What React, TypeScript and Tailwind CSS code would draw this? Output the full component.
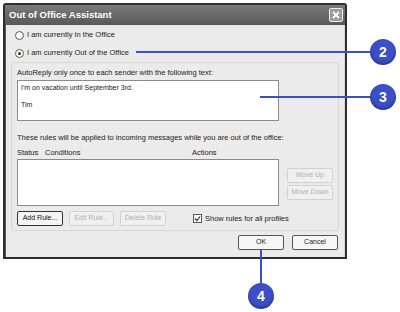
import React from 'react'

const font = { fontFamily: '"Liberation Sans", Arial, sans-serif' }

function Radio({ checked, label }: { checked?: boolean; label: string }) {
  return (
    <div className="flex items-center gap-[3px] h-[12px]">
      <span className="flex h-[9px] w-[9px] items-center justify-center rounded-full border border-[#5a5a5a] bg-white">
        {checked && <span className="h-[3px] w-[3px] rounded-full bg-[#333]" />}
      </span>
      <span className="text-[7.5px] text-[#222]">{label}</span>
    </div>
  )
}

function Btn({ label, disabled, strong, w }: { label: string; disabled?: boolean; strong?: boolean; w: string }) {
  return (
    <div
      className={`flex h-[15px] ${w} items-center justify-center rounded-[2px] text-[7px] ${
        disabled
          ? 'border border-[#d2d2d2] bg-[#f0f0f0] text-[#b0b0b0]'
          : strong
          ? 'border-[1.5px] border-[#333] bg-[#f4f4f4] text-[#111]'
          : 'border border-[#555] bg-[#f6f6f6] text-[#222]'
      }`}
    >
      {label}
    </div>
  )
}

function Callout({ n }: { n: string }) {
  return (
    <div className="flex h-[26px] w-[26px] items-center justify-center rounded-full bg-[#3c4fc6] text-[14px] font-bold text-white shadow-[inset_0_-2px_3px_rgba(0,0,0,0.3)]">
      {n}
    </div>
  )
}

export default function App() {
  return (
    <div className="relative h-[312px] w-[400px] overflow-hidden bg-white" style={font}>
      <div className="ml-[3px] mt-[3px] flex h-[256px] w-[344px] flex-col rounded-t-[3px] border-[2px] border-[#2e2e2e] bg-[#ebebeb]">
        <div className="flex h-[20px] items-center justify-between bg-gradient-to-b from-[#7b7b7b] to-[#585858] pl-[4px] pr-[2px]">
          <span className="text-[9.5px] font-bold text-white">Out of Office Assistant</span>
          <span className="flex h-[14px] w-[14px] items-center justify-center rounded-[2px] border border-[#eee] bg-[#9a9a9a]">
            <svg width="8" height="8" viewBox="0 0 8 8">
              <path d="M1 1L7 7M7 1L1 7" stroke="white" strokeWidth="1.8" />
            </svg>
          </span>
        </div>
        <div className="flex flex-1 border-l-[1px] border-[#555]">
          <div className="flex flex-1 flex-col px-[5px] pt-[4px]">
            <div className="flex flex-col gap-[6px] pl-[4px]">
              <Radio label="I am currently In the Office" />
              <Radio checked label="I am currently Out of the Office" />
            </div>
            <div className="mt-[3px] flex flex-col rounded-[3px] border border-[#d6d6d6] px-[5px] pb-[4px] pt-[4px]">
              <span className="text-[7.5px] text-[#222]">AutoReply only once to each sender with the following text:</span>
              <div className="mt-[2px] flex h-[41px] w-[262px] flex-col border border-[#8a8a8a] bg-white px-[3px] pt-[2px] text-[7px] leading-[9px] text-[#222]">
                <span>I'm on vacation until September 3rd.</span>
                <span className="mt-[8px]">Tim</span>
              </div>
              <span className="mt-[11px] text-[7.5px] text-[#222]">
                These rules will be applied to incoming messages while you are out of the office:
              </span>
              <div className="mt-[3px] flex w-[262px] text-[7.5px] text-[#222]">
                <span className="w-[28px]">Status</span>
                <span className="w-[147px]">Conditions</span>
                <span>Actions</span>
              </div>
              <div className="mt-[1px] flex gap-[8px]">
                <div className="h-[47px] w-[262px] border border-[#8a8a8a] bg-white" />
                <div className="mt-[9px] flex flex-col gap-[2px]">
                  <Btn label="Move Up" disabled w="w-[46px]" />
                  <Btn label="Move Down" disabled w="w-[46px]" />
                </div>
              </div>
              <div className="mt-[5px] flex items-center">
                <Btn label="Add Rule..." strong w="w-[46px]" />
                <div className="ml-[6px]">
                  <Btn label="Edit Rule..." disabled w="w-[45px]" />
                </div>
                <div className="ml-[6px]">
                  <Btn label="Delete Rule" disabled w="w-[46px]" />
                </div>
                <div className="ml-[27px] flex items-center gap-[3px]">
                  <span className="flex h-[9px] w-[9px] items-center justify-center border border-[#555] bg-white">
                    <svg width="7" height="7" viewBox="0 0 7 7">
                      <path d="M1 3.5L3 5.5L6 1.5" stroke="#333" strokeWidth="1.2" fill="none" />
                    </svg>
                  </span>
                  <span className="text-[7.5px] text-[#222]">Show rules for all profiles</span>
                </div>
              </div>
            </div>
            <div className="mt-[4px] flex justify-end gap-[8px] pr-[1px]">
              <Btn label="OK" w="w-[46px]" />
              <Btn label="Cancel" w="w-[46px]" />
            </div>
          </div>
          <div className="w-[7px] border-l border-[#d8d8d8] bg-[#e2e2e2]" />
        </div>
      </div>

      {/* callouts */}
      <div className="absolute left-[136px] top-[51px] h-[2px] w-[238px] bg-[#3c4fc6]" />
      <div className="absolute left-[370px] top-[39px]">
        <Callout n="2" />
      </div>
      <div className="absolute left-[260px] top-[96px] h-[2px] w-[114px] bg-[#3c4fc6]" />
      <div className="absolute left-[370px] top-[84px]">
        <Callout n="3" />
      </div>
      <div className="absolute left-[260px] top-[250px] h-[34px] w-[2px] bg-[#3c4fc6]" />
      <div className="absolute left-[248px] top-[283px]">
        <Callout n="4" />
      </div>
    </div>
  )
}
